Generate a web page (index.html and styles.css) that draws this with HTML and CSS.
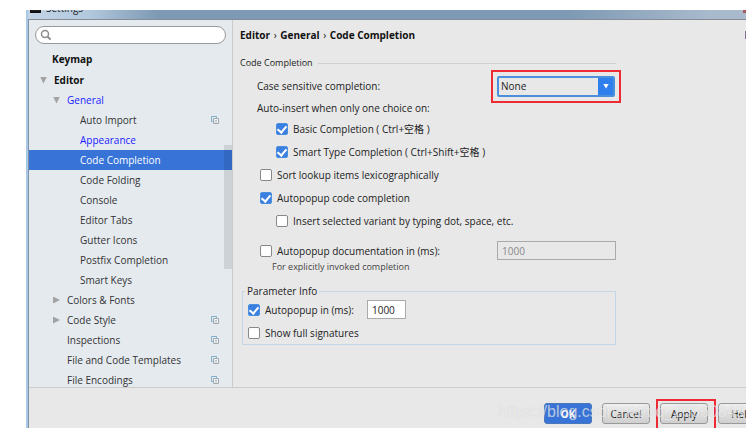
FILE: index.html
```html
<!DOCTYPE html>
<html lang="en">
  <head>
    <meta charset="UTF-8" />
    <meta name="viewport" content="width=device-width, initial-scale=1.0" />
    <title>Settings</title>
    <link rel="stylesheet" href="styles.css">
  </head>
  <body>
    <!-- Shared icon for project-level settings -->
    <svg class="sprite" width="0" height="0">
      <symbol id="copy" viewBox="0 0 8 8">
        <path d="M2 5.500H.5v-5h5V2" fill="none" stroke="#7fb0cc" />
        <path d="M2.500 2.500h5v5h-5z" fill="#edf0f2" stroke="#a3abb2" />
        <path d="M4 4.500h2M4 6h2" stroke="#a3abb2" stroke-width=".7" />
      </symbol>
    </svg>

    <div class="window">
      <header class="titlebar">
        <span class="app-icon"></span>
        <span class="title">Settings</span>
        <span class="close"></span>
      </header>

      <div class="frame">
        <div class="content">
          <!-- Settings tree -->
          <nav class="sidebar">
            <label class="search">
              <svg width="12" height="12" viewBox="0 0 12 12" fill="none" stroke="#8c8c8c">
                <circle cx="5" cy="5" r="3.500" stroke-width="1.500" />
                <path d="M7.600 7.600l3 3" stroke-width="2" />
              </svg>
              <input type="search" aria-label="Search settings" />
            </label>
            <ul class="tree">
              <li><a href="#" class="top keymap">Keymap</a></li>
              <li><a href="#" class="top"><span class="arrow open"></span>Editor</a></li>
              <li><a href="#" class="second changed"><span class="arrow open"></span>General</a></li>
              <li><a href="#" class="third">Auto Import<svg class="copy"><use href="#copy" /></svg></a></li>
              <li><a href="#" class="third changed">Appearance</a></li>
              <li><a href="#" class="third selected">Code Completion</a></li>
              <li><a href="#" class="third">Code Folding</a></li>
              <li><a href="#" class="third">Console</a></li>
              <li><a href="#" class="third">Editor Tabs</a></li>
              <li><a href="#" class="third">Gutter Icons</a></li>
              <li><a href="#" class="third">Postfix Completion</a></li>
              <li><a href="#" class="third">Smart Keys</a></li>
              <li><a href="#" class="second"><span class="arrow"></span>Colors &amp; Fonts</a></li>
              <li><a href="#" class="second"><span class="arrow"></span>Code Style<svg class="copy"><use href="#copy" /></svg></a></li>
              <li><a href="#" class="second">Inspections<svg class="copy"><use href="#copy" /></svg></a></li>
              <li><a href="#" class="second">File and Code Templates<svg class="copy"><use href="#copy" /></svg></a></li>
              <li><a href="#" class="second">File Encodings<svg class="copy"><use href="#copy" /></svg></a></li>
            </ul>
            <span class="scrollbar"></span>
          </nav>

          <!-- Code completion page -->
          <main class="main">
            <div class="heading">
              <h1>Editor <span>›</span> General <span>›</span> Code Completion</h1>
              <span class="edge"></span>
            </div>

            <form id="settings" class="form">
              <h2>Code Completion</h2>
              <div class="row case">
                <label for="case">Case sensitive completion:</label>
                <div class="marked">
                  <div class="select">
                    <select id="case">
                      <option>None</option>
                      <option>All</option>
                      <option>First letter</option>
                    </select>
                    <span class="select-arrow"></span>
                  </div>
                </div>
              </div>
              <p class="row auto">Auto-insert when only one choice on:</p>
              <label class="row nested"><input type="checkbox" checked />Basic Completion ( Ctrl+空格 )</label>
              <label class="row nested"><input type="checkbox" checked />Smart Type Completion ( Ctrl+Shift+空格 )</label>
              <label class="row"><input type="checkbox" />Sort lookup items lexicographically</label>
              <label class="row"><input type="checkbox" checked />Autopopup code completion</label>
              <label class="row nested"><input type="checkbox" />Insert selected variant by typing dot, space, etc.</label>
              <div class="row docs">
                <label><input type="checkbox" />Autopopup documentation in (ms):</label>
                <input type="text" class="wide" value="1000" aria-label="Documentation delay" disabled />
              </div>
              <p class="hint">For explicitly invoked completion</p>

              <fieldset>
                <legend>Parameter Info</legend>
                <div class="param">
                  <label><input type="checkbox" checked />Autopopup in (ms):</label>
                  <input type="text" class="short" value="1000" aria-label="Parameter info delay" />
                </div>
                <label class="param"><input type="checkbox" />Show full signatures</label>
              </fieldset>
            </form>
          </main>
        </div>

        <footer class="footer">
          <button type="submit" form="settings" class="btn primary">OK</button>
          <button type="button" class="btn">Cancel</button>
          <div class="apply"><button type="button" class="btn">Apply</button></div>
          <button type="button" class="btn">Help</button>
          <span class="watermark">https://blog.csdn.net/qq_25560849</span>
        </footer>
      </div>
    </div>
  </body>
</html>
```
FILE: styles.css
```css
* {
  margin: 0;
  padding: 0;
  box-sizing: border-box;
}

body {
  font-family: "Open Sans", "Noto Sans CJK SC", sans-serif;
  font-size: 10px;
  line-height: 20px;
  color: #222;
  background-color: #fff;
  padding: 10px 7px 4px 26px;
  overflow: hidden;
}

input,
select,
button {
  font: inherit;
  color: inherit;
}

.sprite {
  display: none;
}

.window {
  overflow: hidden;
  border-left: 2px solid #a9c8e8;
}

/* Title bar */
.titlebar {
  display: flex;
  align-items: flex-end;
  gap: 5px;
  height: 9px;
  padding: 0 0 6px 2px;
  overflow: hidden;
  background: linear-gradient(90deg, #c3d5e7 0, #b3c9de 60px, #7d99b3 130px, #7d99b3 75%, #a9bacd 95%);
}

.app-icon {
  width: 11px;
  height: 9px;
  border: 1px solid #111;
  border-bottom-width: 2px;
  background-color: #222;
}

.title {
  line-height: 10px;
}

.close {
  width: 3px;
  height: 8px;
  margin-left: auto;
  background-color: #a65b5b;
}

.frame {
  border-top: 1px solid #858c98;
  border-left: 1px solid #7f91a3;
  background-color: #e8e8e8;
}

.content {
  display: flex;
  border-bottom: 1px solid #ccc;
}

/* Sidebar */
.sidebar {
  position: relative;
  flex: 0 0 204px;
  padding-top: 6px;
  background-color: #e5eaef;
  border-right: 1px solid #c9cccf;
}

.search {
  display: flex;
  align-items: center;
  height: 18px;
  margin: 0 6px 3px;
  padding: 0 4px;
  border: 1px solid #999;
  border-radius: 9px;
  background-color: #fff;
}

.search input {
  flex: 1;
  min-width: 0;
  height: 14px;
  border: none;
  outline: none;
  background: none;
}

.tree {
  list-style: none;
  margin-bottom: -3px;
}

.tree a {
  display: flex;
  align-items: center;
  height: 20px;
  color: #333;
  text-decoration: none;
}

.tree .top {
  padding-left: 11px;
  font-weight: bold;
  color: #111;
}

.tree .keymap {
  height: 23px;
  padding-left: 23px;
}

.tree .second {
  padding-left: 38px;
}

.tree .second .arrow {
  margin-left: -14px;
}

.tree .third {
  padding-left: 51px;
}

.tree .changed {
  color: #1a1aff;
}

.tree .selected {
  color: #fff;
  background-color: #3874d8;
}

.arrow {
  width: 7px;
  height: 7px;
  margin-right: 7px;
  background-color: #a3a3a3;
  clip-path: polygon(0 0, 100% 50%, 0 100%);
}

.arrow.open {
  clip-path: polygon(0 0, 100% 0, 50% 100%);
}

.copy {
  width: 8px;
  height: 8px;
  margin-left: auto;
  margin-right: 13px;
}

.scrollbar {
  position: absolute;
  top: 125px;
  right: 0;
  width: 8px;
  height: 124px;
  background-color: rgba(0, 0, 0, 0.1);
}

/* Settings page */
.main {
  flex: 1;
  min-width: 0;
  padding: 5px 0 0 7px;
}

.heading {
  display: flex;
  align-items: center;
  justify-content: space-between;
}

h1 {
  font-size: 10px;
  color: #111;
}

h1 span {
  margin: 0 1px;
  font-weight: normal;
}

.edge {
  width: 1px;
  height: 8px;
  background-color: #8a6f9c;
}

.form {
  max-width: 376px;
}

h2 {
  display: flex;
  align-items: center;
  gap: 5px;
  margin-top: 8px;
  font-size: 9px;
  font-weight: normal;
}

h2::after {
  content: "";
  flex: 1;
  height: 1px;
  background-color: #d0d0d0;
}

.row {
  display: flex;
  align-items: center;
  height: 23px;
  padding-left: 20px;
}

.row.nested {
  padding-left: 36px;
}

.row.case {
  justify-content: space-between;
  height: 26px;
  padding-left: 17px;
}

.row.auto {
  height: 18px;
  padding-left: 17px;
}

.row.docs {
  justify-content: space-between;
  height: 37px;
}

.row label,
.param label {
  display: flex;
  align-items: center;
}

.marked {
  margin: -4px -5px -4px 0;
  padding: 4px;
  border: 2px solid #ee2b33;
}

.select {
  display: flex;
  align-items: center;
  width: 118px;
  height: 21px;
  border: 2px solid #4a90dc;
  border-radius: 2px;
  background-color: #2f80ed;
}

.select select {
  flex: 1;
  min-width: 0;
  height: 17px;
  padding-left: 2px;
  line-height: 16px;
  border: none;
  outline: none;
  appearance: none;
  background-color: #e8e8e8;
}

.select-arrow {
  width: 6px;
  height: 5px;
  margin: 0 4px 0 5px;
  background-color: #fff;
  clip-path: polygon(0 0, 100% 0, 50% 100%);
}

input[type="checkbox"] {
  display: flex;
  justify-content: center;
  flex: none;
  width: 12px;
  height: 12px;
  margin-right: 5px;
  appearance: none;
  border: 1px solid #888;
  border-radius: 2px;
  background-color: #fff;
}

input[type="checkbox"]:checked {
  border-color: #4a90e0;
  background-color: #3b7fe0;
}

input[type="checkbox"]:checked::after {
  content: "";
  width: 4px;
  height: 7px;
  border: solid #fff;
  border-width: 0 2px 2px 0;
  transform: rotate(40deg);
}

input[type="text"] {
  height: 19px;
  padding: 0 4px;
  border: 1px solid #aaa;
  background-color: #fff;
}

input.wide {
  width: 119px;
  color: #888;
  background-color: #e8e8e8;
}

input.short {
  width: 39px;
}

.hint {
  padding-left: 32px;
  font-size: 9px;
  line-height: 14px;
  margin-top: -9px;
  color: #444;
}

fieldset {
  margin: 10px 0 40px 2px;
  padding: 0 0 0 5px;
  border: 1px solid #c3d5e6;
}

legend {
  padding: 0 2px;
  margin-left: -3px;
  line-height: 14px;
}

.param {
  display: flex;
  align-items: center;
  gap: 13px;
  height: 23px;
}

label.param {
  gap: 0;
}

/* Bottom buttons */
.footer {
  position: relative;
  display: flex;
  justify-content: flex-end;
  align-items: flex-start;
  gap: 10px;
  height: 40px;
  padding-top: 15px;
  margin-right: -20px;
  overflow: hidden;
}

.btn {
  width: 48px;
  height: 21px;
  border: 1px solid #999;
  border-radius: 3px;
  background: linear-gradient(#f0f0f0, #cfcfcf);
}

.btn.primary {
  color: #fff;
  font-weight: bold;
  border-color: #4a78b8;
  background: #3874d8;
}

.apply {
  margin: -4px -8px 0 -4px;
  padding: 2px 6px 10px 2px;
  border: 2px solid #ee2b33;
}

.watermark {
  position: absolute;
  left: 470px;
  top: 14px;
  font-family: "Liberation Sans", sans-serif;
  font-size: 16px;
  color: rgba(255, 255, 255, 0.6);
  text-shadow: 0 0 1px rgba(120, 120, 120, 0.3);
  white-space: nowrap;
  pointer-events: none;
}
```
